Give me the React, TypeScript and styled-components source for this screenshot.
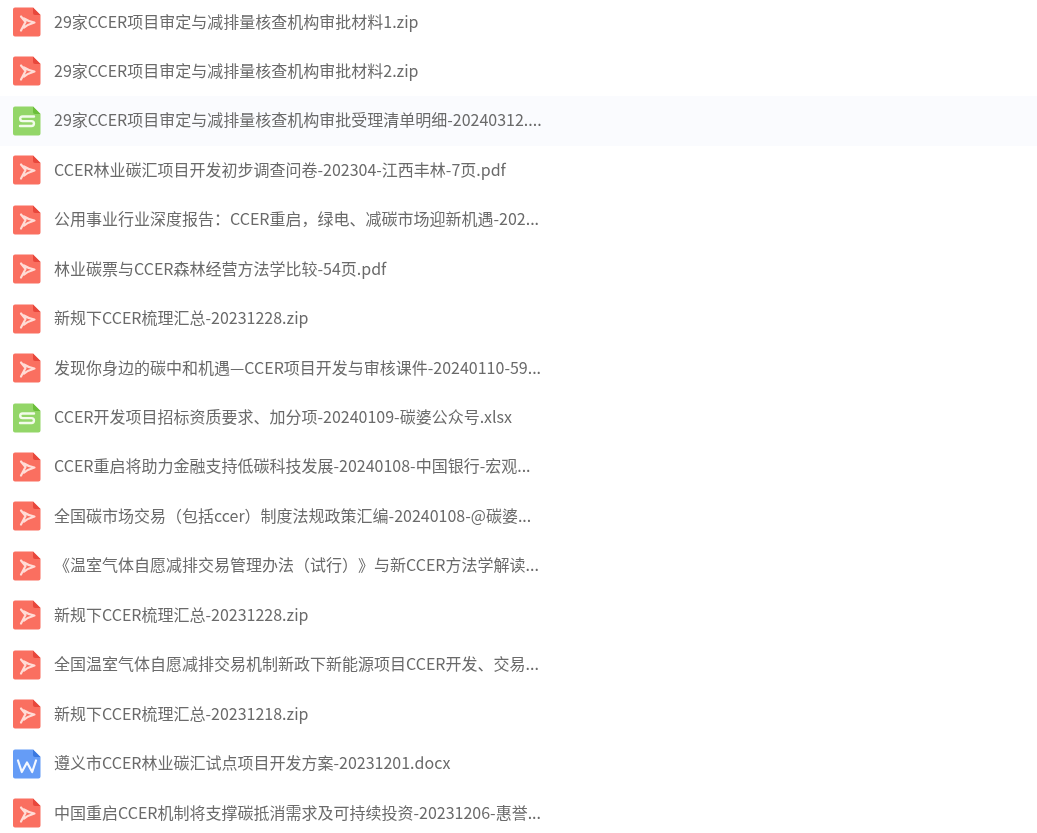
import React from "react";
import styled, { createGlobalStyle } from "styled-components";

const Global = createGlobalStyle`
  html, body { margin: 0; padding: 0; background: #fff; overflow: hidden; height: 100%; }
`;

const List = styled.ul`
  list-style: none;
  margin: -2.7px 0 0;
  padding: 0;
  display: flex;
  flex-direction: column;
`;

const Row = styled.li<{ $active?: boolean }>`
  height: 49.45px;
  display: flex;
  align-items: center;
  gap: 13px;
  padding-left: 13px;
  background: ${(p) => (p.$active ? "#fafbfe" : "transparent")};
`;

const Name = styled.span`
  font-family: "Noto Sans CJK SC", "Noto Sans", sans-serif;
  font-size: 16px;
  line-height: 24px;
  margin-bottom: 3px;
  color: #6a6a6a;
  white-space: nowrap;
  text-spacing-trim: space-all;
  filter: blur(0.3px);
`;

const Icon = styled.svg`
  flex: none;
  filter: blur(0.35px);
`;

type Kind = "pdf" | "xls" | "doc";

const palette: Record<Kind, { body: string; fold: string }> = {
  pdf: { body: "#fa6f60", fold: "#e8473c" },
  xls: { body: "#93d668", fold: "#6bbf3a" },
  doc: { body: "#659cf6", fold: "#3a78e0" },
};

const FileIcon = ({ kind }: { kind: Kind }) => {
  const c = palette[kind];
  return (
    <Icon width="28" height="30" viewBox="0 0 28 30">
      <path
        d="M2 0.5H20L27.5 8V27.5a2 2 0 0 1-2 2H2a2 2 0 0 1-2-2V2.500a2 2 0 0 1 2-2Z"
        fill={c.body}
      />
      <path d="M20 0.5L27.500 8H22a2 2 0 0 1-2-2Z" fill={c.fold} />
      {kind === "pdf" && (
        <path
          d="M8 9.500L12.500 15L8 23.500M11 11.500C14 13.500 18 15 21.500 15.500C18 16.500 14.500 18 11 20.500"
          stroke="#ffdcd6"
          strokeWidth="2.200"
          fill="none"
          strokeLinecap="round"
          strokeLinejoin="round"
        />
      )}
      {kind === "xls" && (
        <path
          d="M21 10.500H9.500a2.300 2.300 0 0 0 0 4.600H18.500a2.400 2.400 0 0 1 0 4.900H7"
          stroke="#f2fbea"
          strokeWidth="2.400"
          fill="none"
          strokeLinecap="round"
        />
      )}
      {kind === "doc" && (
        <path
          d="M5 11.500L8.800 23L14 13.500L19.200 23L23 11.500"
          stroke="#f4f8ff"
          strokeWidth="2.200"
          fill="none"
          strokeLinecap="round"
          strokeLinejoin="round"
        />
      )}
    </Icon>
  );
};

const files: { kind: Kind; name: string; active?: boolean }[] = [
  { kind: "pdf", name: "29家CCER项目审定与减排量核查机构审批材料1.zip" },
  { kind: "pdf", name: "29家CCER项目审定与减排量核查机构审批材料2.zip" },
  { kind: "xls", name: "29家CCER项目审定与减排量核查机构审批受理清单明细-20240312....", active: true },
  { kind: "pdf", name: "CCER林业碳汇项目开发初步调查问卷-202304-江西丰林-7页.pdf" },
  { kind: "pdf", name: "公用事业行业深度报告：CCER重启，绿电、减碳市场迎新机遇-202..." },
  { kind: "pdf", name: "林业碳票与CCER森林经营方法学比较-54页.pdf" },
  { kind: "pdf", name: "新规下CCER梳理汇总-20231228.zip" },
  { kind: "pdf", name: "发现你身边的碳中和机遇—CCER项目开发与审核课件-20240110-59..." },
  { kind: "xls", name: "CCER开发项目招标资质要求、加分项-20240109-碳婆公众号.xlsx" },
  { kind: "pdf", name: "CCER重启将助力金融支持低碳科技发展-20240108-中国银行-宏观..." },
  { kind: "pdf", name: "全国碳市场交易（包括ccer）制度法规政策汇编-20240108-@碳婆..." },
  { kind: "pdf", name: "《温室气体自愿减排交易管理办法（试行）》与新CCER方法学解读..." },
  { kind: "pdf", name: "新规下CCER梳理汇总-20231228.zip" },
  { kind: "pdf", name: "全国温室气体自愿减排交易机制新政下新能源项目CCER开发、交易..." },
  { kind: "pdf", name: "新规下CCER梳理汇总-20231218.zip" },
  { kind: "doc", name: "遵义市CCER林业碳汇试点项目开发方案-20231201.docx" },
  { kind: "pdf", name: "中国重启CCER机制将支撑碳抵消需求及可持续投资-20231206-惠誉..." },
];

export default function App() {
  return (
    <>
      <Global />
      <List>
        {files.map((f, i) => (
          <Row key={i} $active={f.active}>
            <FileIcon kind={f.kind} />
            <Name>{f.name}</Name>
          </Row>
        ))}
      </List>
    </>
  );
}
